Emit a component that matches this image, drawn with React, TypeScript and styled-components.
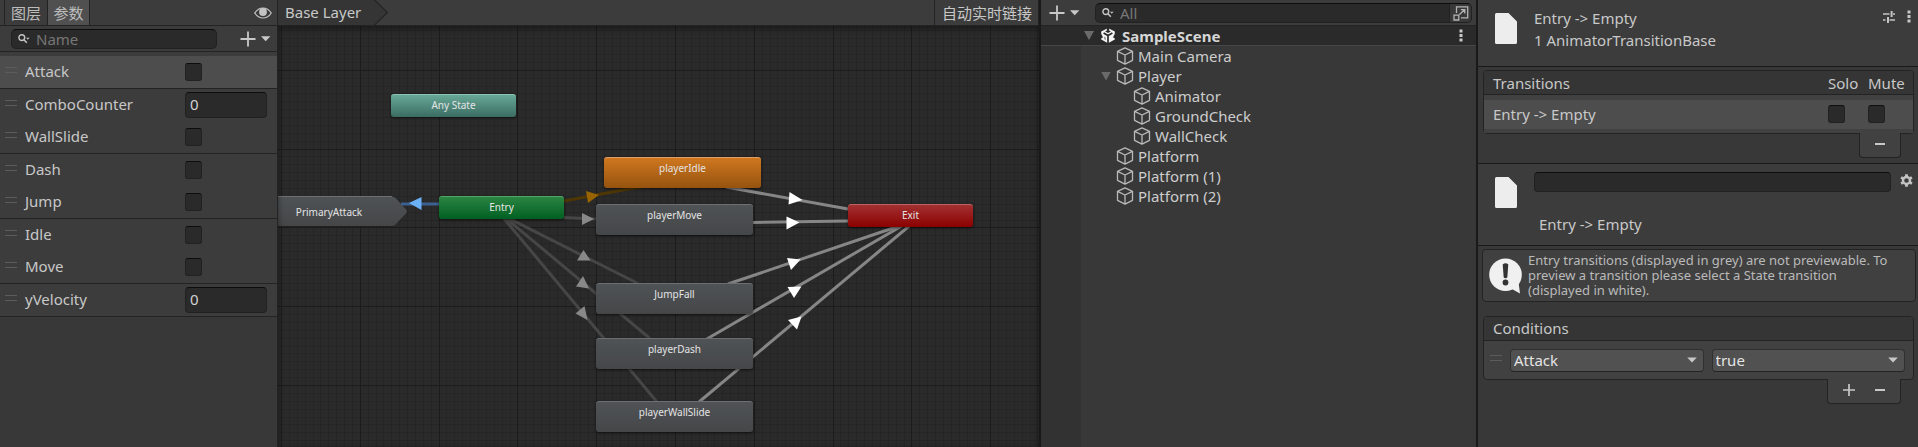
import React from "react";
import styled, { createGlobalStyle, css } from "styled-components";

const GlobalStyle = createGlobalStyle`
  *, *::before, *::after { box-sizing: border-box; }
  body {
    margin: 0;
    background: #191919;
    color: #c8c8c8;
    font: 15px/20px "Noto Sans", "Noto Sans CJK SC", sans-serif;
  }
  button, input, select { font: inherit; color: inherit; margin: 0; }
  button { padding: 0; border: 0; background: none; cursor: default; }
  svg { display: block; flex: none; }
`;

/* ---------- shared parts ---------- */

const Workspace = styled.div`
  display: flex;
  min-height: 100vh;
`;

const Panel = styled.section`
  display: flex;
  flex-direction: column;
  background: #383838;
`;

const Toolbar = styled.header`
  display: flex;
  flex: none;
  align-items: center;
  height: 26px;
  background: #3c3c3c;
  border-bottom: 1px solid #232323;
`;

const fieldLook = css`
  background: #2a2a2a;
  border: 1px solid #212121;
  border-top-color: #0d0d0d;
  border-radius: 4px;
  outline: none;
`;

const TextField = styled.input<{ $tall?: boolean }>`
  ${fieldLook}
  width: 100%;
  min-width: 0;
  height: ${(p) => (p.$tall ? 26 : 20)}px;
  padding: 0 4px 2px;
  color: #d2d2d2;
`;

const Check = styled.input.attrs({ type: "checkbox" })`
  ${fieldLook}
  appearance: none;
  flex: none;
  width: 17px;
  height: 18px;
  border-radius: 3px;

  &:checked { background: #6a6a6a; }
`;

const SearchBox = styled.label`
  ${fieldLook}
  display: flex;
  flex: 1;
  align-items: center;
  min-width: 0;
  height: 20px;
  padding-left: 6px;
  gap: 6px;
  border-radius: 5px;
  overflow: hidden;
`;

const SearchInput = styled.input`
  flex: 1;
  min-width: 0;
  height: 18px;
  padding: 0;
  border: 0;
  outline: 0;
  background: none;

  &::placeholder { color: #777; opacity: 1; }
`;

const IconButton = styled.button`
  display: flex;
  flex: none;
  align-items: center;
`;

const Grip = styled.span`
  flex: none;
  width: 12px;
  height: 6px;
  margin-bottom: 5px;
  border: solid #5c5c5c;
  border-width: 1px 0;
`;

/* ---------- icons ---------- */

const SearchIcon = () => (
  <svg width="12" height="12" viewBox="0 0 12 12" aria-hidden="true">
    <circle cx="3.8" cy="4.6" r="2.9" fill="none" stroke="#c4c4c4" strokeWidth="1.4" />
    <path d="M6 6.8 8.8 9.8" stroke="#c4c4c4" strokeWidth="1.6" />
    <path d="M8 4.8h3.6L9.8 6.8z" fill="#c4c4c4" />
  </svg>
);

const AddMenuIcon = () => (
  <svg width="32" height="16" viewBox="0 0 32 16" aria-hidden="true">
    <path d="M8 0.5v15M0.5 8h15" stroke="#c8c8c8" strokeWidth="1.8" />
    <path d="M21 5.2h9.4L25.7 10.2z" fill="#c8c8c8" />
  </svg>
);

const EyeIcon = () => (
  <svg width="18" height="12" viewBox="0 0 18 12" aria-hidden="true">
    <path d="M0.7 6C3 2.6 5.8 1 9 1s6 1.6 8.3 5C15 9.4 12.2 11 9 11S3 9.4 0.7 6z" fill="none" stroke="#c4c4c4" strokeWidth="1.2" />
    <circle cx="9" cy="5" r="3.9" fill="#c4c4c4" />
  </svg>
);

const CubeIcon = () => (
  <svg width="18" height="18" viewBox="0 0 18 18" aria-hidden="true">
    <path d="M9 0.9 16.5 4.3v9L9 17.1 1.5 13.3v-9zM1.5 4.3 9 8l7.5-3.7M9 8v9" fill="none" stroke="#b9b9b9" strokeWidth="1.3" strokeLinejoin="round" />
  </svg>
);

const SceneIcon = () => (
  <svg width="16" height="17" viewBox="0 0 16 17" aria-hidden="true">
    <path d="M8 1 14.8 4.6v7.8L8 16.2 1.2 12.4V4.6z" fill="#f4f4f4" />
    <path d="M8 8.6v8.4M8 8.6 3.6 6M8 8.6 12.4 6" stroke="#2a2a2a" strokeWidth="1.7" />
    <path d="M8 0v3.6M0 7.2l2 3.7M16 7.2l-2 3.7" stroke="#2a2a2a" strokeWidth="2.4" />
    <path d="M8 2.8 10.8 4.4 8 6 5.2 4.4z" fill="#2a2a2a" />
    <path d="M4.2 12.2 5.8 13.2 5.8 10.4 4 9.4z" fill="#9a9a9a" />
  </svg>
);

const PageIcon = () => (
  <svg width="22" height="31" viewBox="0 0 22 31" aria-hidden="true">
    <path d="M1.5 0H13.5L22 8.5V29.5A1.5 1.5 0 0 1 20.5 31H1.5A1.5 1.5 0 0 1 0 29.5V1.5A1.5 1.5 0 0 1 1.5 0z" fill="#ededed" />
  </svg>
);

const SlidersIcon = () => (
  <svg width="12" height="12" viewBox="0 0 12 12" aria-hidden="true">
    <path d="M0 3h6.5M10 3h2M0 9h2.5M6.5 9H12" stroke="#c4c4c4" strokeWidth="1.3" />
    <path d="M8.6 0v6M5 6v6" stroke="#c4c4c4" strokeWidth="2" />
  </svg>
);

const KebabIcon = () => (
  <svg width="4" height="13" viewBox="0 0 4 13" aria-hidden="true">
    <path d="M.5.5h3v3h-3zM.5 5h3v3h-3zM.5 9.5h3v3h-3z" fill="#c8c8c8" />
  </svg>
);

const PickerIcon = () => (
  <svg width="16" height="16" viewBox="0 0 16 16" aria-hidden="true">
    <path d="M3.5 8V1.8h11.2v11H8M1 10.2h4.8V15H1zM6.5 9.5 11.5 4.8M7.8 4.6h4v4" fill="none" stroke="#b4b4b4" strokeWidth="1.3" />
  </svg>
);

const GearIcon = () => (
  <svg width="13" height="13" viewBox="0 0 13 13" aria-hidden="true">
    <circle cx="6.5" cy="6.5" r="3.5" fill="none" stroke="#c4c4c4" strokeWidth="2.4" />
    <path
      d="M6.5 .3v2.2M6.5 10.5v2.2M1.1 3.4 3 4.5M10 8.5l1.9 1.1M1.1 9.6 3 8.5M10 4.5l1.9-1.1"
      stroke="#c4c4c4"
      strokeWidth="2.8"
    />
  </svg>
);

const InfoIcon = () => (
  <svg width="34" height="36" viewBox="0 0 34 36" aria-hidden="true">
    <path d="M16.5 0.5a16.3 16.3 0 1 1 0 32.6 16.3 16.3 0 0 1 0-32.6z" fill="#f0f0f0" />
    <path d="M22 30.5 31 35.5 29.5 24z" fill="#f0f0f0" />
    <path d="M13.7 6.5q2.8-2.4 5.6 0L18.3 19.5q-1.8 1.6-3.6 0z" fill="#333" />
    <circle cx="16.5" cy="24.5" r="2.9" fill="#333" />
  </svg>
);

const PlusIcon = () => (
  <svg width="12" height="12" viewBox="0 0 12 12" aria-hidden="true">
    <path d="M6 0v12M0 6h12" stroke="#c8c8c8" strokeWidth="1.7" />
  </svg>
);

const MinusIcon = () => (
  <svg width="10" height="12" viewBox="0 0 10 12" aria-hidden="true">
    <path d="M0 6h10" stroke="#c8c8c8" strokeWidth="2" />
  </svg>
);

/* ---------- parameters panel ---------- */

const ParameterPanel = styled(Panel)`
  flex: none;
  width: 278px;
  border-right: 1px solid #232323;
`;

const TabBar = styled(Toolbar)`
  padding: 0 5px 0 4px;
`;

const Tab = styled.button<{ $active?: boolean }>`
  height: 25px;
  width: 43px;
  line-height: 24px;
  border-left: 1px solid #232323;
  border-right: ${(p) => (p.$active ? "1px solid #232323" : "0")};
  color: #bdbdbd;
  background: ${(p) => (p.$active ? "#505050" : "transparent")};
`;

const Spacer = styled.span`
  flex: 1;
`;

const SearchRow = styled(Toolbar)`
  padding: 0 5px 0 11px;
  gap: 23px;
`;

const ParameterList = styled.ul`
  margin: 0;
  padding: 4px 0 0;
  list-style: none;
  background: #3c3c3c;
`;

const ParameterRow = styled.li<{ $selected?: boolean; $ruled?: boolean }>`
  display: flex;
  align-items: center;
  height: ${(p) => (p.$ruled ? 33 : 32)}px;
  padding-left: 5px;
  border-bottom: ${(p) => (p.$ruled ? "1px solid #232323" : "0")};
  background: ${(p) => (p.$selected ? "#4d4d4d" : "transparent")};
`;

const ParameterName = styled.label`
  flex: 1;
  padding: 0 0 2px 8px;
`;

const ParameterValue = styled.span`
  display: flex;
  flex: none;
  width: 92px;
  padding-right: 10px;
`;

type Parameter = { name: string; kind: "bool" | "number"; ruled?: boolean };

const parameters: Parameter[] = [
  { name: "Attack", kind: "bool", ruled: true },
  { name: "ComboCounter", kind: "number" },
  { name: "WallSlide", kind: "bool", ruled: true },
  { name: "Dash", kind: "bool" },
  { name: "Jump", kind: "bool", ruled: true },
  { name: "Idle", kind: "bool" },
  { name: "Move", kind: "bool", ruled: true },
  { name: "yVelocity", kind: "number", ruled: true },
];

const Parameters = () => (
  <ParameterPanel>
    <TabBar>
      <Tab>图层</Tab>
      <Tab $active>参数</Tab>
      <Spacer />
      <IconButton aria-label="Toggle visibility"><EyeIcon /></IconButton>
    </TabBar>
    <SearchRow as="div">
      <SearchBox>
        <SearchIcon />
        <SearchInput placeholder="Name" aria-label="Name" />
      </SearchBox>
      <IconButton aria-label="Add parameter"><AddMenuIcon /></IconButton>
    </SearchRow>
    <ParameterList>
      {parameters.map((p, i) => (
        <ParameterRow key={p.name} $selected={i === 0} $ruled={p.ruled}>
          <Grip />
          <ParameterName htmlFor={p.name}>{p.name}</ParameterName>
          <ParameterValue>
            {p.kind === "bool" ? <Check id={p.name} /> : <TextField id={p.name} $tall defaultValue="0" />}
          </ParameterValue>
        </ParameterRow>
      ))}
    </ParameterList>
  </ParameterPanel>
);

/* ---------- state graph ---------- */

const GraphPanel = styled(Panel)`
  flex: 1;
  min-width: 0;
`;

const Crumb = styled.button`
  display: flex;
  align-items: stretch;
  height: 25px;
  line-height: 25px;
`;

const CrumbLabel = styled.span`
  padding-left: 7px;
  width: 96px;
  text-align: left;
  white-space: nowrap;
  background: #353535;
`;

const LiveLink = styled.button`
  height: 25px;
  padding: 0 6px 0 7px;
  line-height: 24px;
  border-left: 1px solid #232323;
  border-right: 1px solid #232323;
`;

const Canvas = styled.div`
  position: relative;
  flex: 1;
  min-height: 420px;
  overflow: hidden;
  background: #2a2a2a;

  &::after {
    content: "";
    position: absolute;
    inset: 0;
    box-shadow: inset 0 2px 6px rgba(0, 0, 0, 0.45);
    pointer-events: none;
  }
`;

const Wires = styled.svg`
  position: absolute;
  inset: 0;
  width: 100%;
  height: 100%;
`;

type Tone = "teal" | "orange" | "green" | "red" | "grey";

const tones: Record<Tone, [string, string, string]> = {
  teal: ["#67a897", "#3b6c62", "#8cc2b3"],
  orange: ["#cf771f", "#96530f", "#dfa066"],
  green: ["#2b8442", "#006022", "#55a468"],
  red: ["#a23131", "#8c0000", "#bd6262"],
  grey: ["#4f5356", "#454648", "#6c7073"],
};

const Node = styled.button<{ $tone: Tone; $x: number; $y: number; $small?: boolean }>`
  position: absolute;
  left: ${(p) => p.$x}px;
  top: ${(p) => p.$y}px;
  width: ${(p) => (p.$small ? 125 : 157)}px;
  height: ${(p) => (p.$small ? 23 : 31)}px;
  padding-bottom: ${(p) => (p.$small ? 2 : 10)}px;
  border-top: 1px solid ${(p) => tones[p.$tone][2]};
  border-radius: 3px;
  background: linear-gradient(${(p) => tones[p.$tone][0]}, ${(p) => tones[p.$tone][1]});
  box-shadow: 0 1px 3px rgba(0, 0, 0, 0.6);
  color: #e4e4e4;
  font-size: 10px;
  line-height: 20px;
`;

const SubStateNode = styled.button`
  position: absolute;
  left: -28px;
  top: 170px;
  width: 158px;
  height: 32px;
  color: #e4e4e4;
  font-size: 10px;
  line-height: 32px;
`;

const SubStateShape = styled.svg`
  position: absolute;
  inset: 0;
`;

const SubStateLabel = styled.span`
  position: relative;
`;

const GRID_STEP = 78.8;
const GRID_LEFT = 3.5;
const GRID_TOP = -34.5;

const gridLines = (step: number, left: number, top: number) => {
  let d = "";
  for (let x = left; x < 3000; x += step) d += `M${Math.floor(x) + 0.5} 0V1600`;
  for (let y = top; y < 1600; y += step) d += `M0 ${Math.floor(y) + 0.5}H3000`;
  return d;
};

const minorGrid = gridLines(GRID_STEP / 10, GRID_LEFT, GRID_TOP);
const majorGrid = gridLines(GRID_STEP, GRID_LEFT, GRID_TOP);

const wires: { d: string; color: string }[] = [
  { d: "M161 178 123 178", color: "#3c6190" },
  { d: "M286 175 350 163 376 159", color: "#4e3605" },
  { d: "M286 191.5 318 193", color: "#464646" },
  { d: "M224 189 360 257.5", color: "#464646" },
  { d: "M224 189 372 312.5", color: "#464646" },
  { d: "M223 189 379 376", color: "#464646" },
  { d: "M448 161 570 183", color: "#868686" },
  { d: "M475 196.5 570 195", color: "#868686" },
  { d: "M450 258 630 197", color: "#868686" },
  { d: "M428 313.5 634 194", color: "#868686" },
  { d: "M421 376 636 196", color: "#868686" },
];

const arrows: { points: string; color: string }[] = [
  { points: "131,177 143.5,171 143.5,184", color: "#6bb1f8" },
  { points: "308,165 321,169 310,177", color: "#996400" },
  { points: "304,187 316,193 304,199", color: "#888" },
  { points: "305.5,224 299,234.5 312.5,234.5", color: "#888" },
  { points: "305,250 298,260.5 311,262.5", color: "#888" },
  { points: "306.5,280 297.5,287.5 309.5,294", color: "#888" },
  { points: "511.5,166 524.5,174 510.5,178.5", color: "#fff" },
  { points: "508.5,190.5 521.5,196.5 508.5,203.5", color: "#fff" },
  { points: "509,232 522.5,233.5 513,244", color: "#fff" },
  { points: "509.5,261 523.5,260.5 516,272", color: "#fff" },
  { points: "510,294 523.5,290.5 519,303.5", color: "#fff" },
];

const nodes: { name: string; tone: Tone; x: number; y: number; small?: boolean }[] = [
  { name: "Any State", tone: "teal", x: 113, y: 68, small: true },
  { name: "Entry", tone: "green", x: 161, y: 170, small: true },
  { name: "Exit", tone: "red", x: 570, y: 178, small: true },
  { name: "playerIdle", tone: "orange", x: 326, y: 131 },
  { name: "playerMove", tone: "grey", x: 318, y: 178 },
  { name: "JumpFall", tone: "grey", x: 318, y: 257 },
  { name: "playerDash", tone: "grey", x: 318, y: 312 },
  { name: "playerWallSlide", tone: "grey", x: 318, y: 375 },
];

const Graph = () => (
  <GraphPanel>
    <Toolbar>
      <Crumb>
        <CrumbLabel>Base Layer</CrumbLabel>
        <svg width="15" height="25" viewBox="0 0 15 25" aria-hidden="true">
          <path d="M0 0 13.5 12.5 0 25z" fill="#353535" />
          <path d="M0 -0.5 13.5 12.5 0 25.5" fill="none" stroke="#242424" strokeWidth="1.2" />
        </svg>
      </Crumb>
      <Spacer />
      <LiveLink>自动实时链接</LiveLink>
    </Toolbar>
    <Canvas>
      <Wires aria-hidden="true">
        <path d={minorGrid} stroke="#252525" fill="none" />
        <path d={majorGrid} stroke="#1c1c1c" fill="none" />
        {wires.map((w) => (
          <path key={w.d} d={w.d} stroke={w.color} strokeWidth="3" fill="none" />
        ))}
        {arrows.map((a) => (
          <polygon key={a.points} points={a.points} fill={a.color} />
        ))}
      </Wires>
      <SubStateNode>
        <SubStateShape width="158" height="32" viewBox="0 0 158 32" aria-hidden="true">
          <defs>
            <linearGradient id="slate" x1="0" y1="0" x2="0" y2="1">
              <stop offset="0" stopColor="#4f5356" />
              <stop offset="1" stopColor="#454648" />
            </linearGradient>
          </defs>
          <path d="M0 1.5H141L157 17 142 31.5H0z" fill="#1e1e1e" opacity=".7" />
          <path d="M0 0.5H142Q144 0.5 145.5 2L156 13.5Q157.5 15.5 156 17.5L145.5 28.5Q144 30 142 30H0z" fill="url(#slate)" />
          <path d="M0 .5H142" stroke="#6c7073" />
        </SubStateShape>
        <SubStateLabel>PrimaryAttack</SubStateLabel>
      </SubStateNode>
      {nodes.map((n) => (
        <Node key={n.name} $tone={n.tone} $x={n.x} $y={n.y} $small={n.small}>{n.name}</Node>
      ))}
    </Canvas>
  </GraphPanel>
);

/* ---------- hierarchy ---------- */

const HierarchyPanel = styled(Panel)`
  flex: none;
  width: 439px;
  border: solid #191919;
  border-width: 0 2px;
`;

const HierarchyBar = styled(Toolbar)`
  padding: 0 4px 0 8px;
  gap: 14px;
`;

const PickerButton = styled(IconButton)`
  height: 20px;
  width: 22px;
  justify-content: center;
  background: #383838;
  border-left: 1px solid #212121;
`;

const SceneRow = styled.div`
  display: flex;
  flex: none;
  align-items: center;
  height: 20px;
  padding: 0 13px 0 43px;
  gap: 6px;
  background: #2a2a2a;
  border-bottom: 1px solid #464646;
  color: #d6d6d6;
  font-weight: 700;
`;

const Fold = styled.button`
  flex: none;
  width: 10px;
  height: 9px;
  background: #6a6a6a;
  clip-path: polygon(0 0, 100% 0, 50% 100%);
`;

const TreeArea = styled.div`
  flex: 1;
  padding-left: 40px;
  background: linear-gradient(to right, #323232 40px, #383838 40px);
`;

const Tree = styled.ul`
  margin: 0;
  padding: 0;
  list-style: none;
`;

const TreeRow = styled.li<{ $level: number }>`
  display: flex;
  align-items: center;
  height: 20px;
  padding-left: ${(p) => 20 + p.$level * 17}px;
  gap: 4px;
  color: #cdcdcd;
`;

const FoldSlot = styled.span`
  display: flex;
  flex: none;
  width: 11px;
`;

const objects = [
  { name: "Main Camera", level: 0 },
  { name: "Player", level: 0, open: true },
  { name: "Animator", level: 1 },
  { name: "GroundCheck", level: 1 },
  { name: "WallCheck", level: 1 },
  { name: "Platform", level: 0 },
  { name: "Platform (1)", level: 0 },
  { name: "Platform (2)", level: 0 },
];

const Hierarchy = () => (
  <HierarchyPanel>
    <HierarchyBar>
      <IconButton aria-label="Create"><AddMenuIcon /></IconButton>
      <SearchBox>
        <SearchIcon />
        <SearchInput placeholder="All" aria-label="Search scene" />
        <PickerButton aria-label="Open search window"><PickerIcon /></PickerButton>
      </SearchBox>
    </HierarchyBar>
    <SceneRow>
      <Fold aria-label="Collapse scene" />
      <SceneIcon />
      SampleScene
      <Spacer />
      <IconButton aria-label="Scene menu"><KebabIcon /></IconButton>
    </SceneRow>
    <TreeArea>
      <Tree>
        {objects.map((o) => (
          <TreeRow key={o.name} $level={o.level}>
            <FoldSlot>{o.open && <Fold aria-label={`Collapse ${o.name}`} />}</FoldSlot>
            <CubeIcon />
            {o.name}
          </TreeRow>
        ))}
      </Tree>
    </TreeArea>
  </HierarchyPanel>
);

/* ---------- inspector ---------- */

const InspectorPanel = styled(Panel)`
  flex: none;
  width: 440px;
`;

const InspectorHeader = styled.header`
  display: flex;
  align-items: flex-start;
  height: 67px;
  padding: 7px 7px 0 17px;
  background: #3c3c3c;
  border-bottom: 1px solid #191919;
`;

const PageSlot = styled.span`
  flex: none;
  width: 39px;
  padding-top: 6px;
`;

const Heading = styled.div`
  flex: 1;
  line-height: 22px;
`;

const HeaderTools = styled.div`
  display: flex;
  gap: 12px;
  padding-top: 3px;
`;

const ListBlock = styled.section`
  padding: 3px 4px 5px 5px;
`;

const Card = styled.div`
  background: #414141;
  border: 1px solid #232323;
  border-radius: 4px;
`;

const CardHeader = styled.div`
  display: flex;
  height: 24px;
  padding: 0 9px;
  line-height: 23px;
  background: #353535;
  border-bottom: 1px solid #232323;
  border-radius: 3px 3px 0 0;
`;

const TransitionTable = styled.table`
  width: 100%;
  border-collapse: separate;
  border-spacing: 0;
  table-layout: fixed;
  background: #414141;
  border: 1px solid #232323;
  border-radius: 4px;

  th {
    height: 24px;
    padding: 0;
    font-weight: 400;
    text-align: left;
    background: #353535;
    border-bottom: 1px solid #232323;
    white-space: nowrap;
  }
  th:first-child { border-top-left-radius: 3px; }
  th:last-child { border-top-right-radius: 3px; }
  th:first-child, td:first-child { padding-left: 9px; }
  td {
    height: 38px;
    padding: 0;
    background: linear-gradient(#414141 5px, #4d4d4d 5px, #4d4d4d 34px, #414141 34px);
  }
`;

const Column = styled.col<{ $width?: number }>`
  width: ${(p) => (p.$width ? `${p.$width}px` : "auto")};
`;

const CheckCell = styled.td`
  & > input { display: block; }
`;

const ListFooter = styled.div`
  display: flex;
  align-items: center;
  justify-content: space-between;
  width: fit-content;
  height: 25px;
  margin: -1px 13px 0 auto;
  padding: 0 15px 3px;
  gap: 20px;
  background: #414141;
  border: 1px solid #232323;
  border-top: 0;
  border-radius: 0 0 4px 4px;
`;

const TransitionDetail = styled.section`
  display: flex;
  align-items: flex-start;
  height: 83px;
  padding: 7px 5px 0 17px;
  background: #3c3c3c;
  border: solid #191919;
  border-width: 1px 0;
`;

const DetailBody = styled.div`
  flex: 1;
  padding-right: 9px;
`;

const DetailName = styled.div`
  padding: 22px 0 0 5px;
`;

const GearSlot = styled.div`
  padding-top: 3px;
`;

const HelpBox = styled.p`
  display: flex;
  align-items: center;
  min-height: 53px;
  margin: 3px 2px 0 4px;
  padding: 0 20px 0 6px;
  gap: 5px;
  background: #404040;
  border: 1px solid #232323;
  border-radius: 4px;
  color: #bababa;
  font-size: 13px;
  line-height: 15px;
`;

const ConditionsBlock = styled.section`
  padding: 14px 4px 4px 5px;
`;

const ConditionRow = styled.div`
  display: flex;
  align-items: center;
  height: 38px;
  padding: 0 8px 0 6px;
  gap: 8px;
`;

const SelectBox = styled.span`
  display: grid;
  flex: 1;
  align-items: center;

  & > * { grid-area: 1 / 1; }
  & > svg { justify-self: end; margin-right: 7px; pointer-events: none; }
`;

const Select = styled.select`
  appearance: none;
  width: 100%;
  height: 23px;
  padding: 0 20px 1px 3px;
  line-height: 20px;
  color: #e4e4e4;
  background: #515151;
  border: 1px solid #303030;
  border-bottom-color: #242424;
  border-radius: 4px;
  outline: none;
`;

const Dropdown = ({ label, options }: { label: string; options: string[] }) => (
  <SelectBox>
    <Select aria-label={label}>
      {options.map((o) => <option key={o}>{o}</option>)}
    </Select>
    <svg width="10" height="6" viewBox="0 0 10 6" aria-hidden="true">
      <path d="M.2.5H9.8L5 5.5z" fill="#c8c8c8" />
    </svg>
  </SelectBox>
);

const SelectPair = styled.div`
  display: flex;
  flex: 1;
  gap: 8px;
`;

const Inspector = () => (
  <InspectorPanel>
    <InspectorHeader>
      <PageSlot><PageIcon /></PageSlot>
      <Heading>
        <div>Entry -&gt; Empty</div>
        <div>1 AnimatorTransitionBase</div>
      </Heading>
      <HeaderTools>
        <IconButton aria-label="Presets"><SlidersIcon /></IconButton>
        <IconButton aria-label="More options"><KebabIcon /></IconButton>
      </HeaderTools>
    </InspectorHeader>
    <ListBlock>
      <TransitionTable>
        <colgroup>
          <Column />
          <Column $width={40} />
          <Column $width={45} />
        </colgroup>
        <thead>
          <tr>
            <th>Transitions</th>
            <th>Solo</th>
            <th>Mute</th>
          </tr>
        </thead>
        <tbody>
          <tr>
            <td>Entry -&gt; Empty</td>
            <CheckCell><Check aria-label="Solo" /></CheckCell>
            <CheckCell><Check aria-label="Mute" /></CheckCell>
          </tr>
        </tbody>
      </TransitionTable>
      <ListFooter>
        <IconButton aria-label="Remove transition"><MinusIcon /></IconButton>
      </ListFooter>
    </ListBlock>
    <TransitionDetail>
      <PageSlot><PageIcon /></PageSlot>
      <DetailBody>
        <TextField aria-label="Transition name" />
        <DetailName>Entry -&gt; Empty</DetailName>
      </DetailBody>
      <GearSlot>
        <IconButton aria-label="Settings"><GearIcon /></IconButton>
      </GearSlot>
    </TransitionDetail>
    <HelpBox>
      <InfoIcon />
      <span>
        Entry transitions (displayed in grey) are not previewable. To preview a transition please
        select a State transition (displayed in white).
      </span>
    </HelpBox>
    <ConditionsBlock>
      <Card>
        <CardHeader>Conditions</CardHeader>
        <ConditionRow>
          <Grip />
          <SelectPair>
            <Dropdown label="Condition parameter" options={["Attack"]} />
            <Dropdown label="Condition value" options={["true", "false"]} />
          </SelectPair>
        </ConditionRow>
      </Card>
      <ListFooter>
        <IconButton aria-label="Add condition"><PlusIcon /></IconButton>
        <IconButton aria-label="Remove condition"><MinusIcon /></IconButton>
      </ListFooter>
    </ConditionsBlock>
  </InspectorPanel>
);

export default function App() {
  return (
    <>
      <GlobalStyle />
      <Workspace>
        <Parameters />
        <Graph />
        <Hierarchy />
        <Inspector />
      </Workspace>
    </>
  );
}
